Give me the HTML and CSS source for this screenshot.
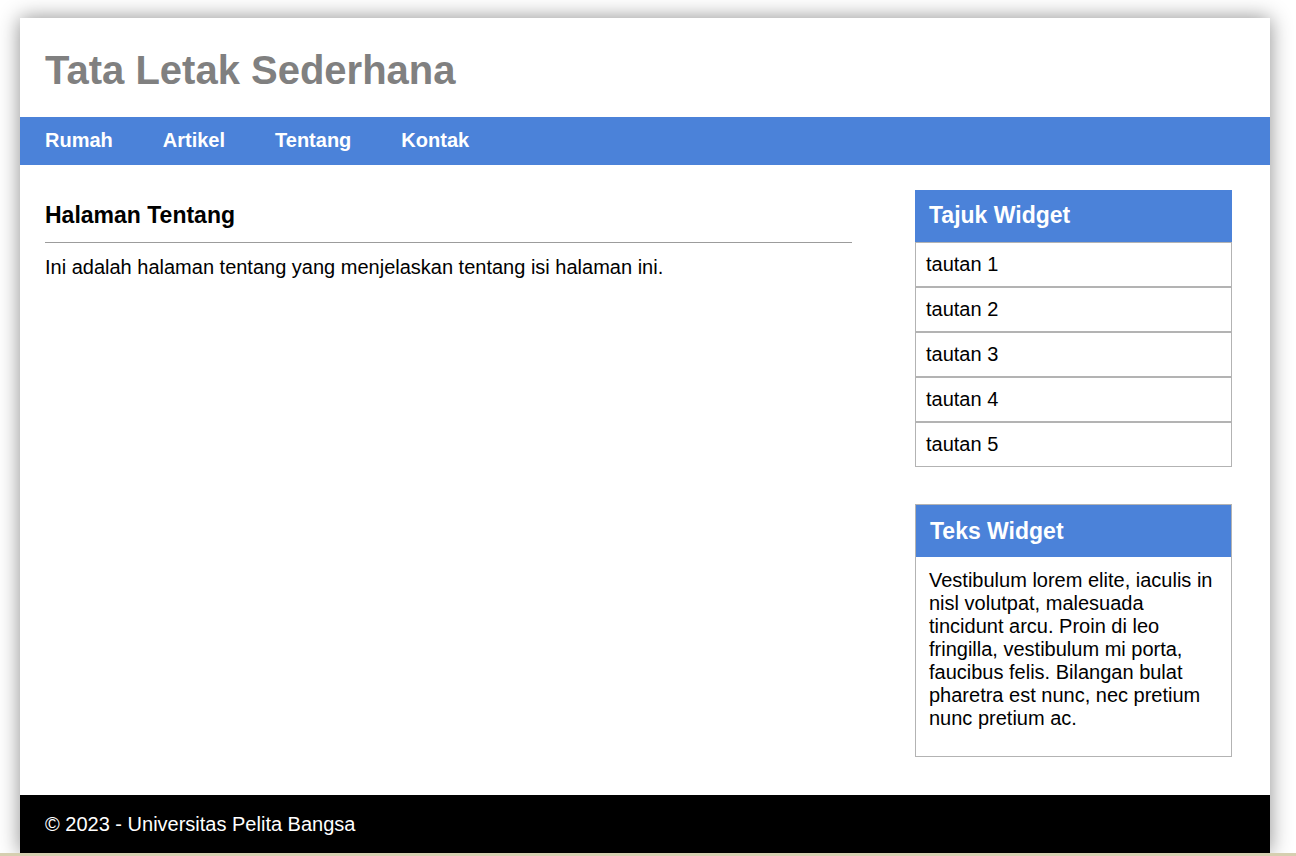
FILE: index.html
```html
<!DOCTYPE html>
<html lang="id">
<head>
<meta charset="utf-8">
<title>Tata Letak Sederhana</title>
<link rel="stylesheet" href="styles.css">
</head>
<body>
<div class="container">
  <header class="site-header">
    <h1 class="site-title">Tata Letak Sederhana</h1>
  </header>
  <nav class="site-nav">
    <a href="#">Rumah</a>
    <a href="#">Artikel</a>
    <a href="#">Tentang</a>
    <a href="#">Kontak</a>
  </nav>
  <div class="content">
    <main class="main">
      <h2 class="page-title">Halaman Tentang</h2>
      <hr class="divider">
      <p class="page-text">Ini adalah halaman tentang yang menjelaskan tentang isi halaman ini.</p>
    </main>
    <aside class="sidebar">
      <div class="widget widget-links">
        <h3 class="widget-title">Tajuk Widget</h3>
        <ul class="link-list">
          <li>tautan 1</li>
          <li>tautan 2</li>
          <li>tautan 3</li>
          <li>tautan 4</li>
          <li>tautan 5</li>
        </ul>
      </div>
      <div class="widget widget-text">
        <h3 class="widget-title">Teks Widget</h3>
        <p class="widget-body">Vestibulum lorem elite, iaculis in nisl volutpat, malesuada tincidunt arcu. Proin di leo fringilla, vestibulum mi porta, faucibus felis. Bilangan bulat pharetra est nunc, nec pretium nunc pretium ac.</p>
      </div>
    </aside>
  </div>
  <footer class="site-footer">© 2023 - Universitas Pelita Bangsa</footer>
</div>
<div class="bottom-strip"></div>
</body>
</html>
```
FILE: styles.css
```css
html, body {
  margin: 0;
  padding: 0;
  background: #ffffff;
}
body {
  font-family: "Liberation Sans", Arial, sans-serif;
  font-size: 20px;
  color: #000;
  padding-top: 18px;
}
.container {
  width: 1250px;
  margin-left: 20px;
  background: #fff;
  box-shadow: 0 0 20px rgba(0, 0, 0, 0.45);
}
.site-header {
  padding: 29px 25px 24px;
}
.site-title {
  margin: 0;
  font-size: 40px;
  line-height: 46px;
  font-weight: bold;
  color: #808080;
}
.site-nav {
  background: #4b82d9;
  padding: 12px 0 13px;
  display: flex;
}
.site-nav a {
  color: #fff;
  font-weight: bold;
  font-size: 20px;
  line-height: 23px;
  text-decoration: none;
  padding: 0 25px;
}
.content {
  display: flex;
  gap: 63px;
  padding: 25px 38px 38px 25px;
  align-items: flex-start;
}
.main {
  flex: 0 0 807px;
}
.page-title {
  margin: 12px 0 14px;
  font-size: 23px;
  line-height: 26px;
  font-weight: bold;
}
.divider {
  border: 0;
  border-top: 1px solid #9c9c9c;
  margin: 0;
  height: 0;
}
.page-text {
  margin: 13px 0 0;
  line-height: 23px;
}
.sidebar {
  flex: 0 0 317px;
  display: flex;
  flex-direction: column;
  gap: 37px;
}
.widget-title {
  margin: 0;
  background: #4b82d9;
  color: #fff;
  font-size: 23px;
  line-height: 26px;
  font-weight: bold;
  padding: 12px 14px 14px;
}
.widget-text .widget-title {
  padding: 13px 14px 13px;
}
.link-list {
  list-style: none;
  margin: 0;
  padding: 0;
}
.link-list li {
  border: 1px solid #b3b3b3;
  padding: 10px 10px;
  line-height: 23px;
}
.widget-text {
  border: 1px solid #b3b3b3;
}
.widget-body {
  margin: 0;
  padding: 12px 13px 26px;
  line-height: 23px;
}
.site-footer {
  background: #000;
  color: #fff;
  padding: 18px 25px 17px;
  line-height: 23px;
}
.bottom-strip {
  position: fixed;
  left: 0;
  right: 0;
  bottom: 0;
  height: 3px;
  background: #d6cfb0;
}
```
